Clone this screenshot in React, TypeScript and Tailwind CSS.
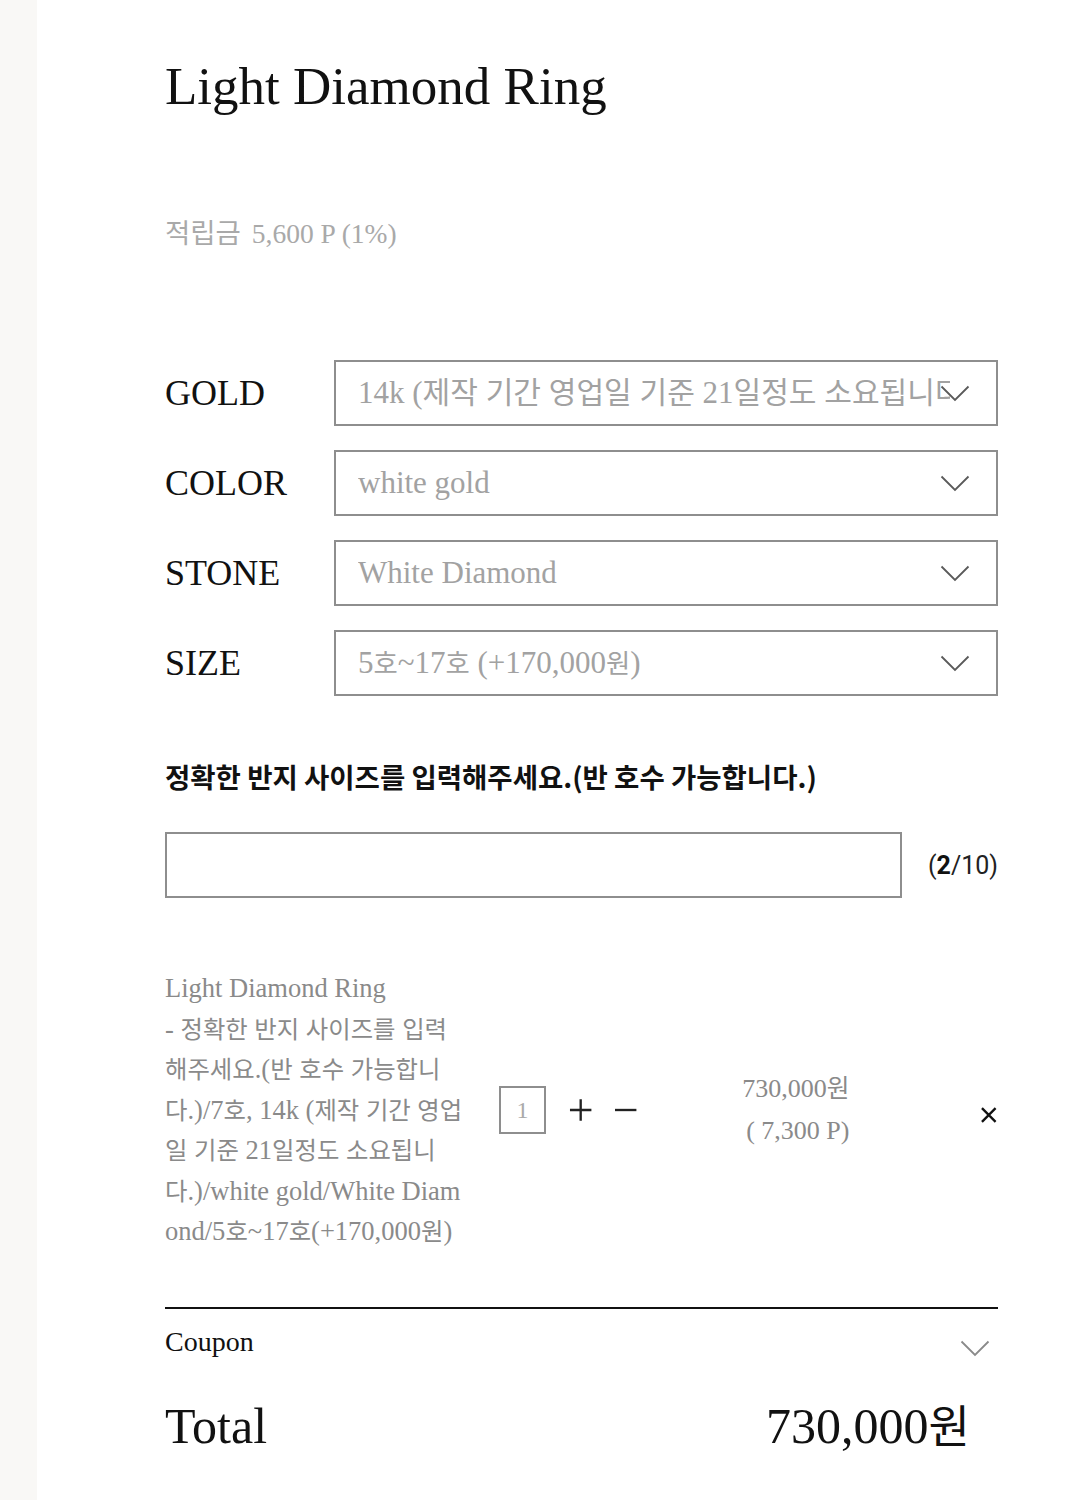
const HANGUL = /([\u1100-\u11FF\u3130-\u318F\uAC00-\uD7AF]+)/;

// Korean glyphs in the CJK fallback are wider than the serif latin, so shrink them per spot
function Mixed({ text, k }: { text: string; k: string }) {
  return (
    <>
      {text.split(HANGUL).map((part, i) =>
        HANGUL.test(part) ? (
          <span key={i} className={k}>
            {part}
          </span>
        ) : (
          part
        )
      )}
    </>
  );
}

function Chevron({ color = "#5a5a5a" }: { color?: string }) {
  return (
    <svg width="30" height="17" viewBox="0 0 30 17" fill="none">
      <polyline points="1.5,1.5 15,15 28.5,1.5" stroke={color} strokeWidth="1.8" />
    </svg>
  );
}

const options = [
  { label: "GOLD", value: "14k (제작 기간 영업일 기준 21일정도 소요됩니다)", k: "text-[0.97em] leading-[0]" },
  { label: "COLOR", value: "white gold", k: "text-[0.85em] leading-[0]" },
  { label: "STONE", value: "White Diamond", k: "text-[0.85em] leading-[0]" },
  { label: "SIZE", value: "5호~17호 (+170,000원)", k: "text-[0.85em] leading-[0]" },
];

const itemLines = [
  "Light Diamond Ring",
  "- 정확한 반지 사이즈를 입력",
  "해주세요.(반 호수 가능합니",
  "다.)/7호, 14k (제작 기간 영업",
  "일 기준 21일정도 소요됩니",
  "다.)/white gold/White Diam",
  "ond/5호~17호(+170,000원)",
];

export default function App() {
  return (
    <div className="flex min-h-[1500px] w-[1073px] bg-white font-['Liberation_Serif','Noto_Sans_CJK_KR',serif] text-[#111]">
      <div className="w-[37px] shrink-0 bg-[#f9f8f6]" />

      <main className="flex w-[961px] flex-col pl-[128px] pt-[60px]">
        {/* title */}
        <h1 className="text-[53px] leading-[52px] text-[#111]">Light Diamond Ring</h1>

        <p className="mt-[106px] h-[32px] text-[27.5px] leading-[32px] text-[#a9a9a9]">
          <Mixed text="적립금" k="mr-[4px] leading-[0]" /> 5,600 P (1%)
        </p>

        {/* options */}
        <div className="mt-[110px] flex flex-col gap-6">
          {options.map((o) => (
            <div key={o.label} className="flex items-center">
              <span className="w-[169px] shrink-0 text-[36px] leading-none text-[#111]">{o.label}</span>
              <div className="relative flex h-[66px] min-w-0 flex-1 items-center border-2 border-[#8e8e8e] pl-[22px]">
                <div className="mr-[46px] min-w-0 flex-1 overflow-hidden whitespace-nowrap text-[31px] leading-[36px] text-[#a2a2a2]">
                  <Mixed text={o.value} k={o.k} />
                </div>
                <div className="absolute right-[26px] top-[23px]">
                  <Chevron />
                </div>
              </div>
            </div>
          ))}
        </div>

        {/* size request */}
        <h2 className="mt-[64px] font-['Noto_Sans_CJK_KR','Noto_Sans',sans-serif] text-[27.5px] font-bold leading-[32px] text-[#111]">
          정확한 반지 사이즈를 입력해주세요.(반 호수 가능합니다.)
        </h2>

        <div className="mt-[40px] flex items-center justify-between">
          <div className="h-[66px] w-[737px] border-2 border-[#8e8e8e]" />
          <span className="font-['Roboto','Noto_Sans',sans-serif] text-[25px] leading-none text-[#222]">
            (<b className="font-bold text-[#111]">2</b>/10)
          </span>
        </div>

        {/* selected item */}
        <div className="mt-[70px] flex items-center">
          <div className="w-[334px] shrink-0 text-[26.5px] text-[#8a8a8a]">
            {itemLines.map((l, i) => (
              <div key={i} className="h-[40.5px] whitespace-nowrap leading-[40.5px]">
                <Mixed text={l} k="text-[0.92em] leading-[0]" />
              </div>
            ))}
          </div>

          <div className="flex h-[48px] w-[48px] items-center justify-center border-2 border-[#8e8e8e] text-[24px] text-[#aaa]">
            1
          </div>
          <svg className="ml-[23px]" width="24" height="24" viewBox="0 0 24 24">
            <path d="M12 1v22M1 12h22" stroke="#222" strokeWidth="2.4" />
          </svg>
          <svg className="ml-[22px]" width="24" height="24" viewBox="0 0 24 24">
            <path d="M1 12h22" stroke="#222" strokeWidth="2.4" />
          </svg>

          <div className="ml-[95px] w-[120px] text-right text-[26px] leading-[42px] text-[#8a8a8a]">
            <div className="h-[42px]">
              730,000<Mixed text="원" k="text-[0.95em] leading-[0]" />
            </div>
            <div className="h-[42px]">( 7,300 P)</div>
          </div>

          <svg className="ml-[131px] mt-[10px]" width="18" height="18" viewBox="0 0 18 18">
            <path d="M2 2l14 14M16 2L2 16" stroke="#111" strokeWidth="2.4" />
          </svg>
        </div>

        {/* coupon + total */}
        <div className="mt-[55px] w-[833px] border-t-2 border-[#111] pt-[15px]">
          <div className="flex items-start justify-between pr-[8px]">
            <span className="text-[28px] leading-[36px] text-[#111]">Coupon</span>
            <div className="mt-[16px]">
              <Chevron color="#8a8a8a" />
            </div>
          </div>

          <div className="mt-[38px] flex h-[56px] items-center justify-between pr-[28px] text-[50px] leading-[56px] text-[#111]">
            <span>Total</span>
            <span>
              730,000<Mixed text="원" k="text-[0.9em] leading-[0]" />
            </span>
          </div>
        </div>
      </main>
    </div>
  );
}
